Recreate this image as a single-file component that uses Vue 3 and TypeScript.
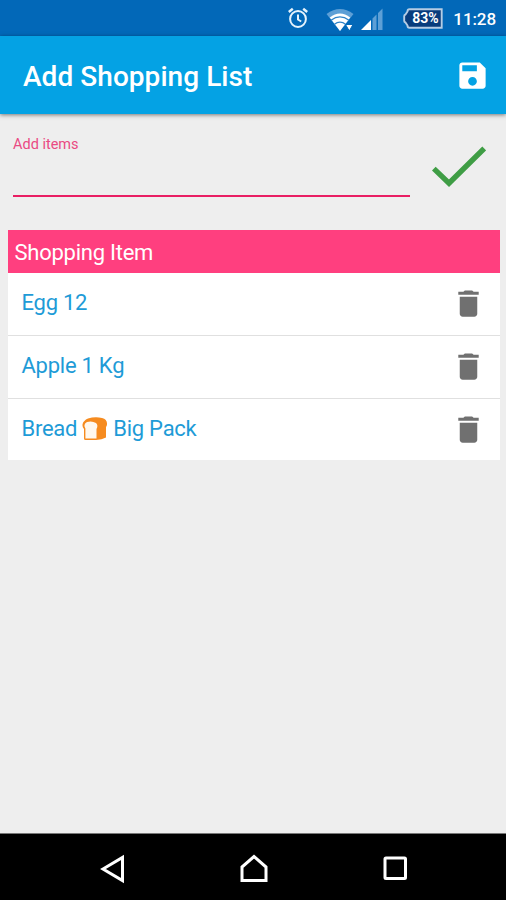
<script setup lang="ts">
import { ref } from 'vue'

interface ShoppingItem {
  id: number
  name: string
  detail?: string
}

const draft = ref('')
const items = ref<ShoppingItem[]>([
  { id: 1, name: 'Egg 12' },
  { id: 2, name: 'Apple 1 Kg' },
  { id: 3, name: 'Bread', detail: 'Big Pack' },
])

function addItem() {
  const name = draft.value.trim()
  if (!name) return
  items.value.push({ id: Date.now(), name })
  draft.value = ''
}

function removeItem(id: number) {
  items.value = items.value.filter((item) => item.id !== id)
}
</script>

<template>
  <div class="screen">
    <div class="status">
      <svg class="alarm" viewBox="0 0 22 22" fill="none" stroke="#e6f3fc" stroke-width="2">
        <circle cx="11" cy="12" r="7.9" />
        <path d="M11 7.5v5l3.2 2" />
        <path d="M1.800 5l4-3.300M20.200 5l-4-3.300" stroke-width="2.400" />
      </svg>
      <svg class="wifi" viewBox="0 0 28 24">
        <path d="M.5 6Q14-4 27.500 6L14 23z" fill="#5d9fd6" />
        <path d="M3.800 9.500Q14 1.500 24.200 9.500L14 23z" fill="#fff" />
        <path d="M5 12.200Q14 5.500 23 12.200M8.200 16.400Q14 12 19.800 16.400" fill="none" stroke="#2f83c8" stroke-width="1.300" />
        <path d="M19.500 16.500h7.500l-3.700 6.500z" fill="#fff" stroke="#0268b8" stroke-width="1" />
      </svg>
      <svg class="signal" viewBox="0 0 22 22">
        <path d="M0 22L10 12V22z" fill="#fff" />
        <path d="M11.500 10.500L15.500 6.500V22h-4zM17 5L21.500 .5V22H17z" fill="#5d9fd6" />
      </svg>
      <div class="battery">
        <svg viewBox="0 0 40 21">
          <path d="M6.500 1.200H38.700V19.800H6.500Q4.500 19.800 4.500 17.500L2.500 14.500Q1.200 14 1.200 13V8Q1.200 7 2.500 6.500L4.500 3.500Q4.500 1.200 6.500 1.200z" fill="#083c7c" stroke="#b5cce4" stroke-width="1.900" />
        </svg>
        <span>83%</span>
      </div>
      <span class="clock">11:28</span>
    </div>

    <header class="bar">
      <h1>Add Shopping List</h1>
      <button class="icon-button" aria-label="Save">
        <svg viewBox="0 0 24 24" fill="#fff">
          <path d="M17 3H5c-1.11 0-2 .9-2 2v14c0 1.1.89 2 2 2h14c1.1 0 2-.9 2-2V7l-4-4zm-5 16c-1.66 0-3-1.34-3-3s1.34-3 3-3 3 1.34 3 3-1.34 3-3 3zm3-10H5V5h10v4z" />
        </svg>
      </button>
    </header>

    <main>
      <form class="entry" @submit.prevent="addItem">
        <label class="field">
          <span>Add items</span>
          <input v-model="draft" type="text" />
        </label>
        <button class="confirm" aria-label="Add">
          <svg viewBox="0 0 54 42" fill="none" stroke="#3f9d45" stroke-width="5.4">
            <path d="M1.8 22.6L17 37.2L52.2 2.4" />
          </svg>
        </button>
      </form>

      <section class="list">
        <h2>Shopping Item</h2>
        <ul>
          <li v-for="item in items" :key="item.id">
            <span class="name">{{ item.name }}</span>
            <template v-if="item.detail">
              <svg class="bread" viewBox="0 0 26 24">
                <path d="M6 1.5Q13-.5 20 1Q25.500 2.500 25 7.500Q24.800 9 24 10V20.500Q20 22.500 14 23H3.500Q2 23 2 21.500V12Q0 10 .6 7Q1.500 3.500 6 1.500z" fill="#f68b1f" />
                <path d="M5 5Q10 3.500 14 6Q16.500 8.500 14.500 12V21.500H3.400V11.500Q.8 7.500 5 5z" fill="#fff8ee" />
              </svg>
              <span class="name">{{ item.detail }}</span>
            </template>
            <button class="icon-button delete" aria-label="Delete" @click="removeItem(item.id)">
              <svg viewBox="0 0 24 24" fill="#707070">
                <path d="M6 19c0 1.100.900 2 2 2h8c1.100 0 2-.900 2-2V7.300H6v11.700zM19 4h-3.500l-1-1h-5l-1 1H5v2h14V4z" />
              </svg>
            </button>
          </li>
        </ul>
      </section>
    </main>

    <nav class="nav">
      <svg viewBox="0 0 30 30"><path d="M5 15L24.500 3.500V26.500z" /></svg>
      <svg viewBox="0 0 30 30"><path d="M3 26.500V13L15 2.500L27 13V26.500z" /></svg>
      <svg viewBox="0 0 30 30"><rect x="5" y="4" width="20.500" height="20.500" rx="1" /></svg>
    </nav>
  </div>
</template>

<style>
body {
  margin: 0;
  background: #eee;
}
</style>

<style scoped>
.screen {
  width: 506px;
  height: 900px;
  display: flex;
  flex-direction: column;
  overflow: hidden;
  background: #eee;
  font-family: Roboto, "Liberation Sans", sans-serif;
}
h1, h2, ul {
  margin: 0;
  padding: 0;
}
svg {
  display: block;
}
button {
  padding: 0;
  border: 0;
  background: none;
}
.status {
  flex: none;
  height: 36px;
  box-sizing: border-box;
  display: flex;
  align-items: center;
  justify-content: flex-end;
  padding: 0 10px 0 0;
  background: #0268b8;
  color: #fff;
}
.alarm {
  width: 22px;
  height: 22px;
  margin-right: 17px;
}
.wifi {
  width: 28px;
  height: 24px;
  margin: 3px 7px 0 0;
}
.signal {
  width: 22px;
  height: 22px;
  margin: 2px 20px 0 0;
}
.battery {
  display: grid;
  width: 40px;
  height: 21px;
  margin-right: 10px;
}
.battery > * {
  grid-area: 1 / 1;
}
.battery span {
  padding-left: 4px;
  text-align: center;
  font-size: 14px;
  font-weight: 700;
  line-height: 21px;
}
.clock {
  padding-top: 2px;
  font-size: 17px;
  font-weight: 500;
  letter-spacing: -0.1px;
}
.bar {
  flex: none;
  height: 78px;
  box-sizing: border-box;
  display: flex;
  align-items: center;
  justify-content: space-between;
  padding: 1px 16px 0 23px;
  background: #04a2e4;
  box-shadow: 0 1px 4px rgba(0, 0, 0, 0.5);
  color: #fff;
}
h1 {
  padding-top: 2px;
  font-size: 28px;
  font-weight: 500;
  line-height: 32px;
  letter-spacing: 0.05px;
}
.icon-button {
  width: 35px;
  height: 35px;
}
main {
  flex: 1;
}
.entry {
  height: 116px;
  box-sizing: border-box;
  display: flex;
  justify-content: space-between;
  padding: 22px 20px 0 13px;
}
.field {
  width: 397px;
  height: 61px;
  box-sizing: border-box;
  display: flex;
  flex-direction: column;
  border-bottom: 2px solid #e91e63;
}
.field span {
  color: #ea4a83;
  font-size: 14.500px;
  line-height: 17px;
}
.field input {
  flex: 1;
  min-height: 0;
  padding: 0;
  border: 0;
  outline: 0;
  background: none;
  font: inherit;
}
.confirm {
  width: 54px;
  height: 42px;
  margin-top: 10px;
}
.list {
  margin: 0 6.500px 0 7.500px;
}
h2 {
  height: 43px;
  padding-left: 7px;
  background: #ff3f7f;
  color: #fff;
  font-size: 22px;
  font-weight: 400;
  line-height: 45px;
  letter-spacing: -0.25px;
}
ul {
  list-style: none;
}
li {
  height: 63px;
  box-sizing: border-box;
  display: flex;
  align-items: center;
  padding: 0 14px 3px 14px;
  border-bottom: 1.500px solid #e0e0e0;
  background: #fff;
  color: #1e9bd7;
}
li:last-child {
  height: 61px;
  padding-bottom: 2px;
  border-bottom: 0;
}
.name {
  font-size: 22px;
  line-height: 28px;
  letter-spacing: -0.25px;
}
.bread {
  width: 26px;
  height: 24px;
  margin: 0 5px;
}
.delete {
  margin: 2px 0 0 auto;
}
.nav {
  flex: none;
  height: 67px;
  box-sizing: border-box;
  display: flex;
  justify-content: center;
  gap: 111px;
  padding: 20px 0 0 1px;
  border-top: 1px solid #777;
  background: #000;
}
.nav svg {
  width: 30px;
  height: 30px;
  fill: none;
  stroke: #fff;
  stroke-width: 3;
}
</style>
